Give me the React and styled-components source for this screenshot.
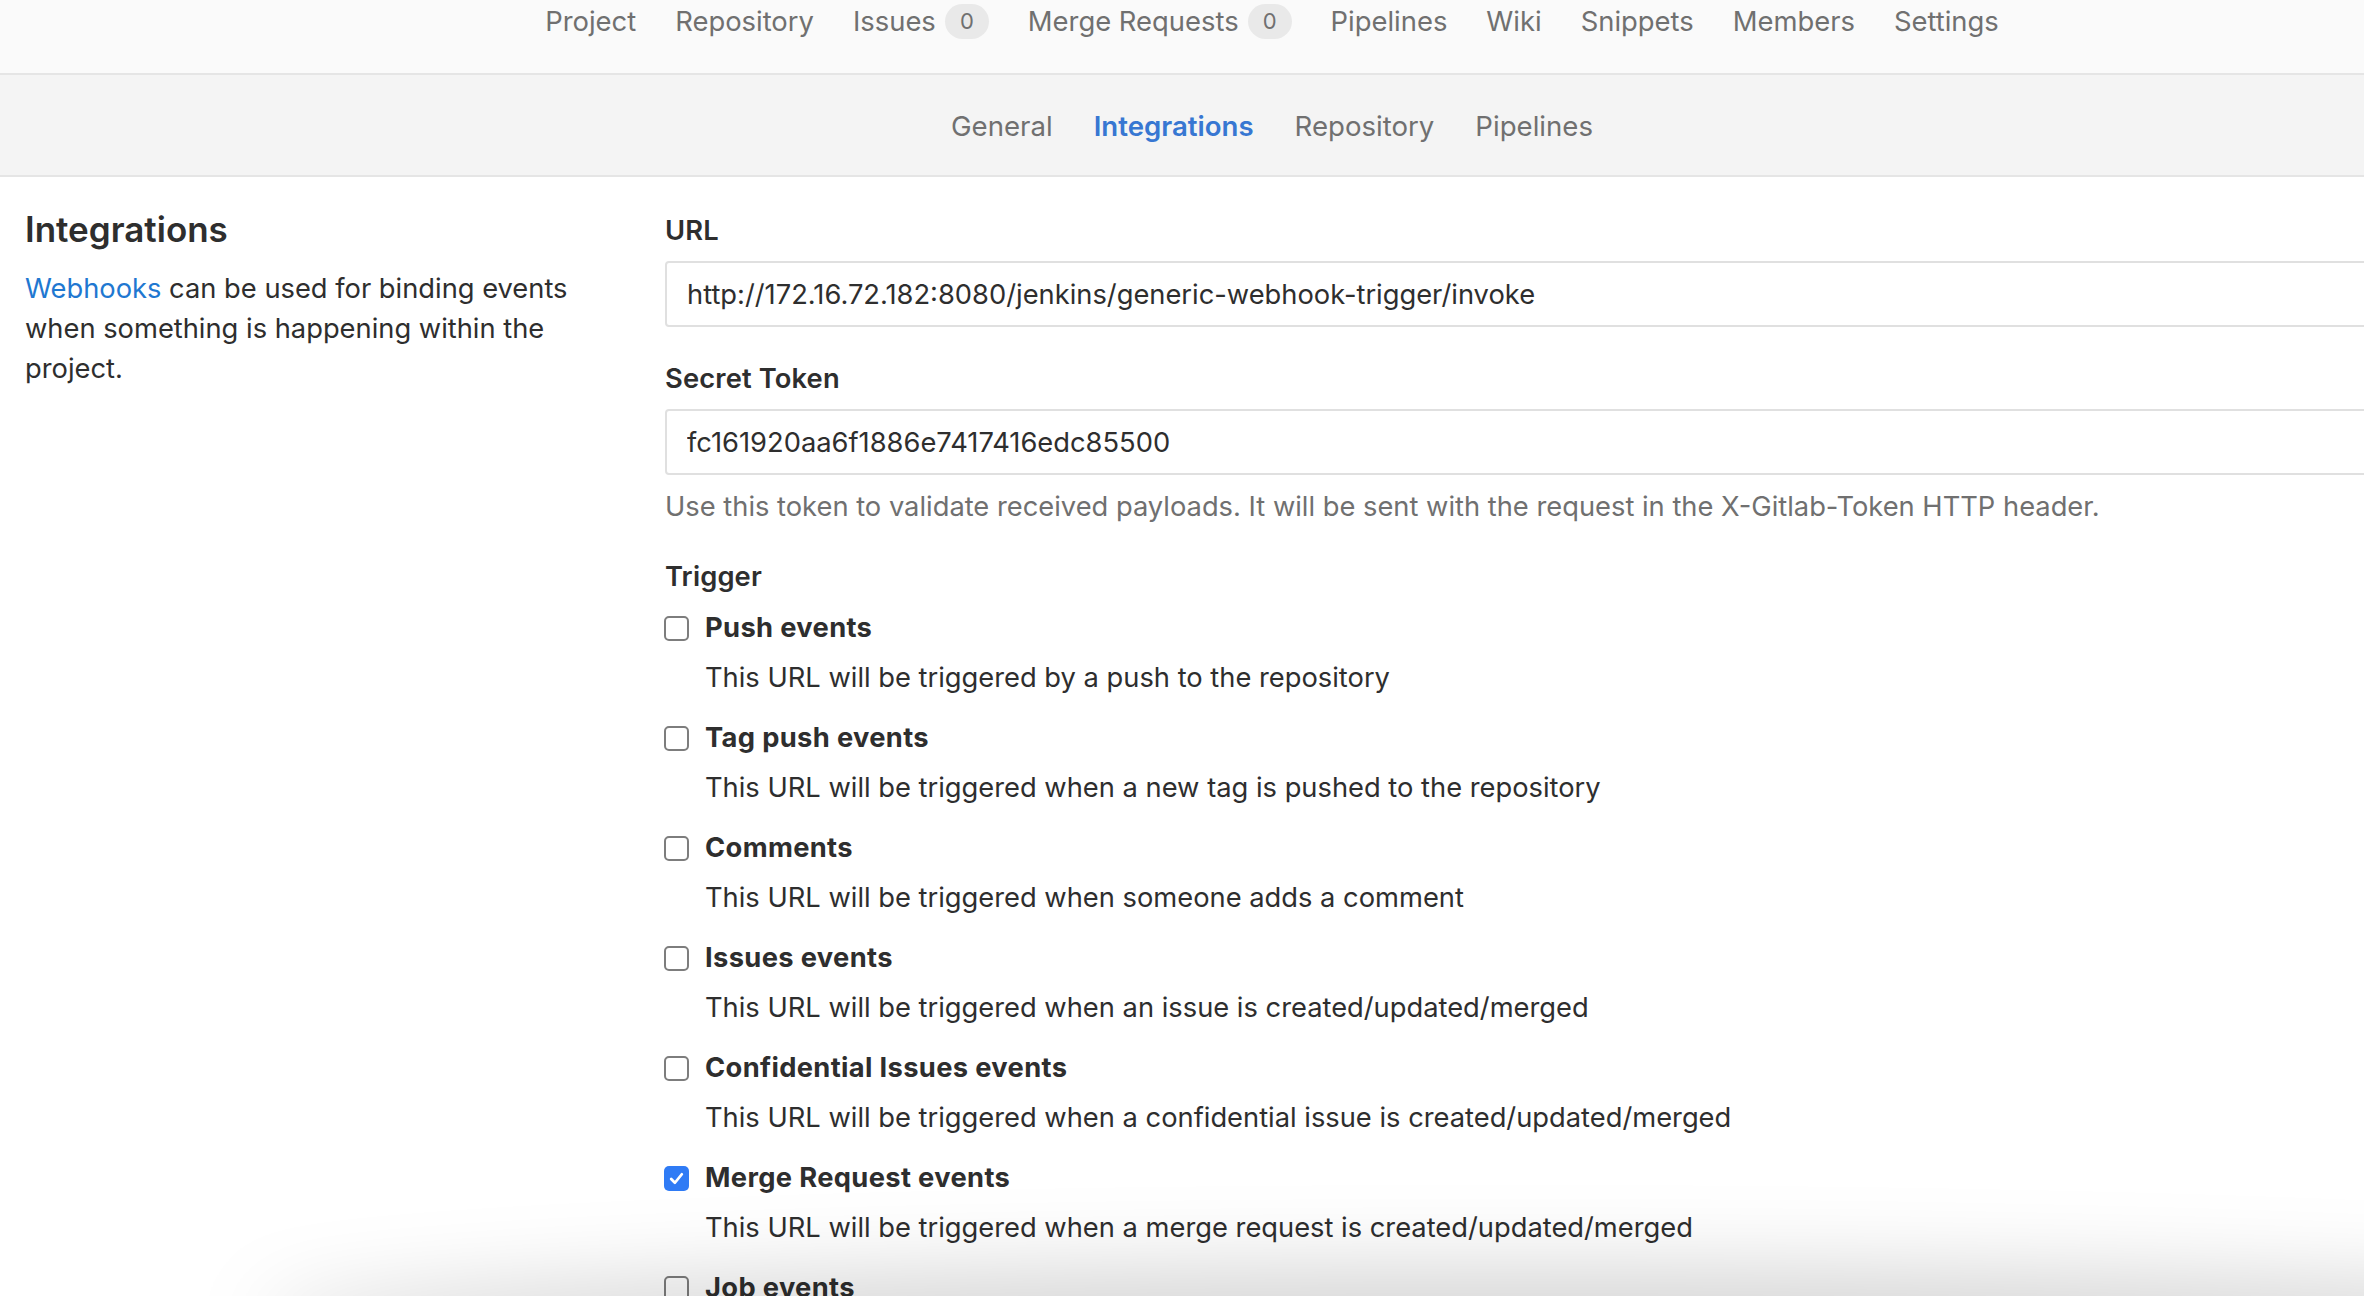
import React from "react";
import styled, { createGlobalStyle } from "styled-components";

const GlobalStyle = createGlobalStyle`
  html, body {
    margin: 0;
    padding: 0;
    overflow: hidden;
    background: #ffffff;
  }
  body {
    font-family: Inter, "Noto Sans", "Liberation Sans", sans-serif;
    color: #2e2e2e;
  }
  * { box-sizing: border-box; }
`;

const Page = styled.div`
  position: relative;
  width: 2544px;
  height: 1296px;
  overflow: hidden;
  background: #ffffff;
`;

const TopBar = styled.nav`
  height: 75px;
  background: #fafafa;
  border-bottom: 2px solid #e5e5e5;
  display: flex;
  justify-content: center;
  align-items: flex-start;
  gap: 39px;
`;

const NavLink = styled.a`
  display: inline-flex;
  align-items: center;
  gap: 9px;
  font-size: 27.4px;
  line-height: 42px;
  color: #707070;
  text-decoration: none;
`;

const Badge = styled.span`
  display: inline-flex;
  align-items: center;
  justify-content: center;
  min-width: 44px;
  height: 35px;
  border-radius: 18px;
  background: #e9e9e9;
  color: #707070;
  font-size: 22px;
`;

const SubBar = styled.nav`
  height: 102px;
  padding-top: 2px;
  background: #f4f4f4;
  border-bottom: 2px solid #e5e5e5;
  display: flex;
  justify-content: center;
  align-items: center;
  gap: 41px;
`;

const SubLink = styled.a`
  font-size: 27.6px;
  line-height: 42px;
  color: ${(p) => (p.$active ? "#3777d2" : "#707070")};
  font-weight: ${(p) => (p.$active ? 600 : 400)};
  text-decoration: none;
`;

const Main = styled.main`
  display: grid;
  grid-template-columns: 640px 1fr;
  padding: 30px 25px 0;
`;

const Aside = styled.section`
  display: flex;
  flex-direction: column;
`;

const Heading = styled.h4`
  margin: 0 0 18px;
  font-size: 35px;
  line-height: 44px;
  font-weight: 600;
  color: #2e2e2e;
`;

const Intro = styled.p`
  margin: 0;
  max-width: 590px;
  font-size: 27.3px;
  line-height: 40px;
  color: #2e2e2e;
`;

const Link = styled.a`
  color: #1f78d1;
  text-decoration: none;
`;

const Form = styled.section`
  display: flex;
  flex-direction: column;
  padding-top: 4px;
`;

const Label = styled.label`
  display: block;
  font-size: 27.3px;
  letter-spacing: 0.15px;
  line-height: 40px;
  font-weight: 600;
  color: #2e2e2e;
  margin-bottom: 10px;
`;

const TextInput = styled.input`
  display: block;
  width: 100%;
  height: 66px;
  margin: 0 0 ${(p) => p.$mb || 0}px;
  padding: 0 20px;
  border: 2px solid #e0e0e0;
  border-radius: 4px;
  background: #ffffff;
  font-family: inherit;
  font-size: 27.3px;
  color: #2e2e2e;
  outline: none;
`;

const Help = styled.p`
  margin: 12px 0 0;
  font-size: 27.3px;
  line-height: 40px;
  color: #707070;
`;

const TriggerTitle = styled.div`
  margin: 30px 0 11px;
  font-size: 27.3px;
  letter-spacing: 0.15px;
  line-height: 40px;
  font-weight: 600;
  color: #2e2e2e;
`;

const Option = styled.div`
  display: flex;
  flex-direction: column;
  margin-bottom: 20px;
`;

const OptionRow = styled.label`
  display: flex;
  align-items: center;
  gap: 16px;
  font-size: 27.3px;
  letter-spacing: 0.35px;
  line-height: 40px;
  font-weight: 700;
  color: #2e2e2e;
`;

const Box = styled.span`
  display: inline-flex;
  align-items: center;
  justify-content: center;
  flex: none;
  width: 25px;
  height: 25px;
  margin-left: -1px;
  border-radius: 5px;
  border: ${(p) => (p.$checked ? "none" : "2px solid #7d7d7d")};
  background: ${(p) => (p.$checked ? "#2f7bf5" : "#ffffff")};
`;

const OptionDesc = styled.div`
  margin-top: 10px;
  padding-left: 40px;
  font-size: 27.3px;
  line-height: 40px;
  color: #2e2e2e;
`;

const BottomShade = styled.div`
  position: absolute;
  left: 260px;
  right: -200px;
  bottom: -80px;
  height: 110px;
  border-radius: 50%;
  background: rgba(0, 0, 0, 0.16);
  filter: blur(40px);
  pointer-events: none;
`;

const Check = () => (
  <svg width="17" height="17" viewBox="0 0 16 16" fill="none">
    <path
      d="M3 8.5 L6.5 12 L13 4"
      stroke="#ffffff"
      strokeWidth="2.6"
      strokeLinecap="round"
      strokeLinejoin="round"
    />
  </svg>
);

const navItems = [
  { label: "Project" },
  { label: "Repository" },
  { label: "Issues", badge: 0 },
  { label: "Merge Requests", badge: 0 },
  { label: "Pipelines" },
  { label: "Wiki" },
  { label: "Snippets" },
  { label: "Members" },
  { label: "Settings" },
];

const subItems = ["General", "Integrations", "Repository", "Pipelines"];

const triggers = [
  { title: "Push events", desc: "This URL will be triggered by a push to the repository" },
  { title: "Tag push events", desc: "This URL will be triggered when a new tag is pushed to the repository" },
  { title: "Comments", desc: "This URL will be triggered when someone adds a comment" },
  { title: "Issues events", desc: "This URL will be triggered when an issue is created/updated/merged" },
  { title: "Confidential Issues events", desc: "This URL will be triggered when a confidential issue is created/updated/merged" },
  { title: "Merge Request events", desc: "This URL will be triggered when a merge request is created/updated/merged", checked: true },
  { title: "Job events", desc: "This URL will be triggered when the job status changes" },
  { title: "Pipeline events", desc: "This URL will be triggered when the pipeline status changes" },
  { title: "Wiki Page events", desc: "This URL will be triggered when a wiki page is created/updated" },
];

export default function App() {
  return (
    <Page>
      <GlobalStyle />
      <TopBar>
        {navItems.map((n) => (
          <NavLink key={n.label} href="#">
            {n.label}
            {n.badge !== undefined && <Badge>{n.badge}</Badge>}
          </NavLink>
        ))}
      </TopBar>
      <SubBar>
        {subItems.map((s) => (
          <SubLink key={s} href="#" $active={s === "Integrations"}>
            {s}
          </SubLink>
        ))}
      </SubBar>
      <Main>
        <Aside>
          <Heading>Integrations</Heading>
          <Intro>
            <Link href="#">Webhooks</Link> can be used for binding events when
            something is happening within the project.
          </Intro>
        </Aside>
        <Form>
          <Label>URL</Label>
          <TextInput
            readOnly
            $mb={32}
            value="http://172.16.72.182:8080/jenkins/generic-webhook-trigger/invoke"
          />
          <Label>Secret Token</Label>
          <TextInput readOnly value="fc161920aa6f1886e7417416edc85500" />
          <Help>
            Use this token to validate received payloads. It will be sent with
            the request in the X-Gitlab-Token HTTP header.
          </Help>
          <TriggerTitle>Trigger</TriggerTitle>
          {triggers.map((t) => (
            <Option key={t.title}>
              <OptionRow>
                <Box $checked={t.checked}>{t.checked && <Check />}</Box>
                {t.title}
              </OptionRow>
              <OptionDesc>{t.desc}</OptionDesc>
            </Option>
          ))}
        </Form>
      </Main>
      <BottomShade />
    </Page>
  );
}
